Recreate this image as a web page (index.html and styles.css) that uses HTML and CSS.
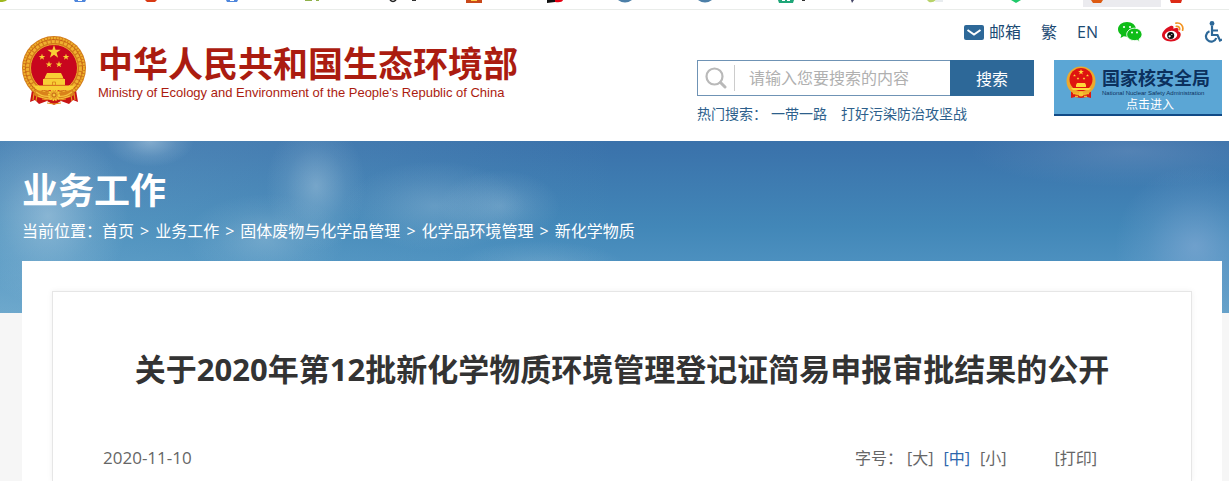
FILE: index.html
```html
<!DOCTYPE html>
<html lang="zh-CN">
<head>
    <meta charset="UTF-8">
    <meta name="viewport" content="width=device-width, initial-scale=1.0">
    <title>中华人民共和国生态环境部</title>
    <link rel="stylesheet" href="styles.css">
</head>
<body>
    <!-- National emblem: detailed one for the logo, simple one for the nuclear safety box -->
    <svg class="sprite" aria-hidden="true">
        <symbol id="star" viewBox="-10 -10 20 20">
            <path d="M0-10 2.3-3.1 9.5-3.1 3.7 1.2 5.9 8.1 0 3.8-5.9 8.1-3.7 1.2-9.5-3.1-2.3-3.1z"/>
        </symbol>
        <symbol id="emblem" viewBox="0 0 64 70">
            <path d="M10 54 8 66l5-2 4 4 8-3 7 4 7-4 8 3 4-4 5 2-2-12z" fill="#c81414"/>
            <path d="M12 57l-1 7M15 59l-1 6M52 57l1 7M49 59l1 6M20 63l6 1M44 63l-6 1M25 67l7 1 7-1" stroke="#e8961e" stroke-width="1.2" fill="none"/>
            <circle cx="32" cy="32" r="32" fill="#d27a1a"/>
            <circle cx="32" cy="32" r="30" fill="none" stroke="#eeb02a" stroke-width="2" stroke-dasharray="2 1"/>
            <circle cx="32" cy="32" r="26.500" fill="none" stroke="#f0b030" stroke-width="3" stroke-dasharray="3 1.200"/>
            <circle cx="32" cy="32" r="28.400" fill="none" stroke="#bd5212" stroke-width="0.700" stroke-dasharray="2 2"/>
            <circle cx="32" cy="32" r="23.500" fill="#c8061e" stroke="#e9a52a" stroke-width="1"/>
            <g fill="#f8cf35">
                <use href="#star" x="25" y="9" width="14" height="14"/>
                <use href="#star" x="16.500" y="17.500" width="7" height="7"/>
                <use href="#star" x="40.500" y="17.500" width="7" height="7"/>
                <use href="#star" x="23.500" y="25" width="7" height="7"/>
                <use href="#star" x="33.500" y="25" width="7" height="7"/>
                <path d="M25 37h14l2 4H23zM23 41h18v2H23zM21 43h22v6H21zM11 49.500h42l-3 4.500H15z"/>
            </g>
            <path d="M22 42.500h20M21 49.300h22M30.500 49v-3h3v3" stroke="#d87f18" stroke-width="0.800" fill="none"/>
            <path d="M14 53c6 5 30 5 36 0l2 6c-8 6-32 6-40 0z" fill="#d9821a"/>
            <path d="M14 56c5 4 10 5 15 4M50 56c-5 4-10 5-15 4M16 60c5 2 8 3 12 3M48 60c-5 2-8 3-12 3" stroke="#f5c03c" stroke-width="1.300" fill="none"/>
            <circle cx="32" cy="59" r="5" fill="#e9a52a" stroke="#f8cf35" stroke-width="2" stroke-dasharray="1.500 1"/>
            <circle cx="32" cy="59" r="2" fill="#f6ca3a" stroke="#b9500e" stroke-width="0.800"/>
        </symbol>
        <symbol id="emblem-small" viewBox="0 0 30 33">
            <path d="M5 24v8l4-1 6 1 6-1 4 1v-8z" fill="#dd1a12"/>
            <circle cx="15" cy="15" r="14.500" fill="#eda92c"/>
            <circle cx="15" cy="13.500" r="11.500" fill="#df1410"/>
            <g fill="#ffd83a">
                <use href="#star" x="12" y="3" width="6" height="6"/>
                <use href="#star" x="7" y="8" width="3" height="3"/>
                <use href="#star" x="20" y="8" width="3" height="3"/>
                <use href="#star" x="10.500" y="11" width="3" height="3"/>
                <use href="#star" x="16.500" y="11" width="3" height="3"/>
                <path d="M11 17h8l1 2v2H10v-2zM5 22h20l-2 2H7z"/>
            </g>
            <path d="M7 27.500h5M18 27.500h5M9 30.500h3M18 30.500h3" stroke="#f4b62c" stroke-width="1.500"/>
            <circle cx="15" cy="28" r="2.500" fill="#f7c532"/>
        </symbol>
    </svg>

    <div class="tab-strip">
        <svg width="1229" height="9" viewBox="0 0 1229 9" aria-hidden="true">
            <rect x="1083" y="0" width="78" height="7" fill="#ebebef"/>
            <path d="M0 0h7q-2 2-7 2z" fill="#9fb820"/>
            <path d="M74 0h12l-1 2H75zM226 0h12l-1 2h-10z" fill="#4f86dc"/>
            <path d="M78 0h4v1h-4zM230 0h4v1h-4z" fill="#fff"/>
            <path d="M145 0h12l-2 2h-8z" fill="#d93a14"/>
            <path d="M305 0h7v1h-7zM316 0h3v1h-3z" fill="#8fb04a"/>
            <path d="M390 0q3 3 6 0" fill="none" stroke="#222" stroke-width="1.500"/>
            <path d="M412 0h4v1h-4zM802 0h3v1h-3z" fill="#333"/>
            <path d="M466 0h16v3h-16z" fill="#c9481a"/>
            <path d="M471 0h6v1h-6z" fill="#ffd24a"/>
            <path d="M547 0h9l-1 2-8 1z" fill="#111"/>
            <path d="M555 0h8q-1 3-8 2z" fill="#e60012"/>
            <path d="M618 0h14q-7 5-14 0zM698 0h14q-7 5-14 0z" fill="#4d7fa8"/>
            <path d="M778 0h16l-1 3h-14z" fill="#1fa678"/>
            <path d="M782 0h3v1h-3zM787 0h3v1h-3z" fill="#fff"/>
            <path d="M851 0h3l-2 3z" fill="#446"/>
            <path d="M927 0h9q-3 3-7 2z" fill="#b8d36a"/>
            <path d="M936 0h7v2h-8z" fill="#e8ecef"/>
            <path d="M1011 0h10l-5 3z" fill="#1fc96a"/>
            <path d="M1091 0h12l-2 3h-8z" fill="#dd5a12"/>
            <path d="M1170 0h12l-1 3h-10z" fill="#dd2a16"/>
        </svg>
    </div>

    <header class="header">
        <a class="brand" href="#">
            <svg class="brand-emblem"><use href="#emblem"/></svg>
            <span class="brand-text">
                <span class="brand-cn">中华人民共和国生态环境部</span>
                <span class="brand-en">Ministry of Ecology and Environment of the People's Republic of China</span>
            </span>
        </a>

        <div class="header-right">
            <nav class="tools">
                <a class="mail" href="#">
                    <svg width="20" height="15" viewBox="0 0 20 15" aria-hidden="true">
                        <rect width="20" height="15" rx="2" fill="#2d6898"/>
                        <path d="M3.500 5 10 9.500 16.500 5" fill="none" stroke="#fff" stroke-width="2"/>
                    </svg>
                    邮箱
                </a>
                <a href="#">繁</a>
                <a href="#">EN</a>
                <a href="#" aria-label="微信">
                    <svg width="24" height="20" viewBox="0 0 24 20">
                        <path d="M9 0C4 0 0 3.200 0 7.300c0 2.300 1.300 4.200 3.300 5.600L2.500 16l3.300-1.700c1 .3 2 .4 3.200.4C14 14.700 18 11.400 18 7.300S14 0 9 0z" fill="#0fbd18"/>
                        <path d="M16.500 6.200c-4.400 0-7.800 2.800-7.800 6.200s3.400 6.200 7.800 6.200c.9 0 1.800-.1 2.600-.4l2.500 1.500-.6-2.500c1.800-1.100 3-2.900 3-4.800 0-3.400-3.200-6.200-7.500-6.200z" fill="#0fbd18" stroke="#fff" stroke-width="0.900"/>
                        <g fill="#fff"><circle cx="6" cy="5" r="1.100"/><circle cx="12" cy="5" r="1.100"/><circle cx="14" cy="10.500" r="1"/><circle cx="19" cy="10.500" r="1"/></g>
                    </svg>
                </a>
                <a href="#" aria-label="微博">
                    <svg width="22" height="20" viewBox="0 0 22 20">
                        <path d="M8 4.200c2-1 3.800-.5 3.500 1.700l-.2.900c2-.9 5.600-1.300 5.200 1.300l-.3 1.100c1.500.5 2.500 1.400 2.500 3.300 0 4-4.400 7-9.800 7C4 19.500 0 17 0 13.300 0 9.500 4.300 5.700 8 4.200z" fill="#dc0f1e"/>
                        <ellipse cx="9" cy="13.200" rx="6.200" ry="4.300" transform="rotate(-7 9 13.200)" fill="#fff"/>
                        <circle cx="8.700" cy="13.400" r="3.500" fill="#111"/>
                        <circle cx="7.600" cy="14.300" r="1.100" fill="#fff"/><circle cx="9.800" cy="12.500" r=".6" fill="#fff"/>
                        <path d="M14 1.200c4.500-1 7.800 2.700 6.600 7M14.300 4.400c2.300-.4 3.800 1.200 3.200 3.300" fill="none" stroke="#f29422" stroke-width="1.700" stroke-linecap="round"/>
                    </svg>
                </a>
                <a href="#" aria-label="无障碍">
                    <svg width="18" height="22" viewBox="0 0 18 22" fill="none" stroke="#2d6898" stroke-width="2.200">
                        <circle cx="8" cy="2.500" r="2.400" fill="#2d6898" stroke="none"/>
                        <path d="M8 5v9h5.500l2.500 5.500 2-1M8 9.500h6M5.500 10.300A5.300 5.300 0 1 0 12.300 17"/>
                    </svg>
                </a>
            </nav>

            <div class="header-row">
                <div class="search">
                    <form class="search-form">
                        <label class="search-icon" for="keyword" aria-label="搜索内容">
                            <svg width="22" height="22" viewBox="0 0 22 22" fill="none" stroke="#b9b9b9">
                                <circle cx="9.500" cy="9.500" r="8" stroke-width="2.200"/>
                                <path d="M15.500 15.500 20 20" stroke-width="3" stroke-linecap="round"/>
                            </svg>
                        </label>
                        <input class="search-input" id="keyword" type="text" placeholder="请输入您要搜索的内容">
                        <button class="search-button" type="button">搜索</button>
                    </form>
                    <div class="hot">
                        <span>热门搜索：</span>
                        <a href="#">一带一路</a>
                        <a href="#">打好污染防治攻坚战</a>
                    </div>
                </div>

                <a class="nuclear" href="#">
                    <svg class="nuclear-emblem"><use href="#emblem-small"/></svg>
                    <span class="nuclear-text">
                        <span class="nuclear-cn">国家核安全局</span>
                        <span class="nuclear-en">National Nuclear Safety Administration</span>
                        <span class="nuclear-enter">点击进入</span>
                    </span>
                </a>
            </div>
        </div>
    </header>

    <section class="banner">
        <h2>业务工作</h2>
        <nav class="breadcrumb">
            <span>当前位置：<a href="#">首页</a></span>
            <span>&gt;</span>
            <a href="#">业务工作</a>
            <span>&gt;</span>
            <a href="#">固体废物与化学品管理</a>
            <span>&gt;</span>
            <a href="#">化学品环境管理</a>
            <span>&gt;</span>
            <a href="#">新化学物质</a>
        </nav>
    </section>

    <main class="content">
        <article class="article">
            <h1>关于2020年第12批新化学物质环境管理登记证简易申报审批结果的公开</h1>
            <div class="meta">
                <time class="date" datetime="2020-11-10">2020-11-10</time>
                <div class="font-size">
                    <span>字号：</span>
                    <button type="button">[大]</button>
                    <button type="button" class="active">[中]</button>
                    <button type="button">[小]</button>
                    <button type="button" class="print">[打印]</button>
                </div>
            </div>
        </article>
    </main>
</body>
</html>
```
FILE: styles.css
```css
* {
    box-sizing: border-box;
}

body {
    display: flex;
    flex-direction: column;
    min-height: 100vh;
    margin: 0;
    background-color: #f6f6f6;
    color: #666;
    font-family: "Open Sans", "Noto Sans CJK SC", sans-serif;
    font-size: 16px;
    line-height: 24px;
}

a {
    color: inherit;
    text-decoration: none;
}

button,
input {
    font-family: inherit;
    font-size: 16px;
}

svg {
    display: block;
    flex: none;
}

.sprite {
    position: absolute;
    width: 0;
    height: 0;
}

.tab-strip {
    height: 10px;
    overflow: hidden;
    background-color: #fff;
    border-bottom: 1px solid #e9ece9;
}

/* Header */
.header {
    display: flex;
    justify-content: space-between;
    height: 131px;
    padding: 0 7px 0 22px;
    background-color: #fff;
}

.brand {
    display: flex;
    align-items: flex-start;
    gap: 12px;
    padding-top: 26px;
    color: #ab1c10;
}

.brand-emblem {
    width: 64px;
    height: 70px;
}

.brand-text {
    display: flex;
    flex-direction: column;
    padding-top: 8px;
    white-space: nowrap;
}

.brand-cn {
    font-size: 35px;
    font-weight: bold;
    line-height: 40px;
}

.brand-en {
    font-family: "Liberation Sans", Arial, sans-serif;
    font-size: 13px;
    line-height: 18px;
}

.header-right {
    display: flex;
    flex-direction: column;
    gap: 16px;
    padding-top: 10px;
}

.tools {
    display: flex;
    align-items: center;
    justify-content: flex-end;
    gap: 20px;
    height: 24px;
    color: #1c4a73;
}

.mail {
    display: flex;
    align-items: center;
    gap: 5px;
}

.header-row {
    display: flex;
    align-items: flex-start;
    gap: 20px;
}

.search-form {
    display: flex;
    width: 337px;
    height: 36px;
}

.search-icon {
    display: flex;
    align-items: center;
    padding: 0 7px;
    border: 1px solid #6f93b5;
    border-right: 0;
}

.search-input {
    flex: 1;
    min-width: 0;
    padding: 0 0 0 15px;
    border: 0 solid #6f93b5;
    border-width: 1px 0;
    border-radius: 0;
    background: linear-gradient(#ccc, #ccc) 0 4px / 1px 26px no-repeat #fff;
    outline: none;
}

.search-input::placeholder {
    color: #b0b0b0;
}

.search-button {
    width: 84px;
    border: 0;
    background-color: #2d6898;
    color: #fff;
    cursor: pointer;
}

.hot {
    display: flex;
    padding-top: 6px;
    color: #2d5f8c;
    font-size: 14px;
}

.hot a {
    margin-right: 14px;
}

.hot span {
    margin-right: 4px;
}

.nuclear {
    display: flex;
    gap: 6px;
    width: 168px;
    height: 56px;
    padding: 6px 12px 0;
    background-color: #5ba6d5;
    border-bottom: 2px solid #114a86;
    color: #0c315e;
}

.nuclear-emblem {
    width: 30px;
    height: 33px;
}

.nuclear-text {
    display: flex;
    flex-direction: column;
    white-space: nowrap;
}

.nuclear-cn {
    font-size: 18px;
    font-weight: bold;
    line-height: 24px;
}

.nuclear-en {
    font-family: "Liberation Sans", Arial, sans-serif;
    font-size: 6px;
    line-height: 7px;
}

.nuclear-enter {
    padding-left: 24px;
    color: #fff;
    font-size: 12px;
    line-height: 16px;
}

/* Banner with the sky behind it */
.banner {
    height: 172px;
    padding: 30px 22px 0;
    color: #fff;
    background:
        radial-gradient(ellipse 44px 26px at 150px 0, rgba(190, 215, 232, 0.5), rgba(190, 215, 232, 0.15) 60%, transparent),
        radial-gradient(ellipse 80px 90px at 48px 75px, rgba(190, 215, 232, 0.5), rgba(190, 215, 232, 0.15) 60%, transparent),
        radial-gradient(ellipse 50px 65px at 316px 45px, rgba(175, 205, 225, 0.45), rgba(175, 205, 225, 0.12) 60%, transparent),
        radial-gradient(ellipse 80px 45px at 265px 98px, rgba(175, 205, 225, 0.35), rgba(175, 205, 225, 0.1) 60%, transparent),
        radial-gradient(ellipse 90px 45px at 435px 65px, rgba(175, 205, 225, 0.3), rgba(175, 205, 225, 0.1) 60%, transparent),
        radial-gradient(ellipse 60px 36px at 500px 65px, rgba(175, 205, 225, 0.3), rgba(175, 205, 225, 0.1) 60%, transparent),
        radial-gradient(ellipse 90px 30px at 540px 130px, rgba(175, 205, 225, 0.3), rgba(175, 205, 225, 0.1) 60%, transparent),
        radial-gradient(ellipse 80px 80px at 1195px 105px, rgba(150, 180, 220, 0.5), rgba(150, 180, 220, 0.15) 60%, transparent),
        radial-gradient(ellipse 160px 36px at 1130px 10px, rgba(140, 165, 200, 0.3), rgba(140, 165, 200, 0.1) 60%, transparent),
        linear-gradient(90deg, rgba(130, 185, 212, 0.3), transparent 50%),
        linear-gradient(#3a71aa, #4287b8 50%, #4c90bf 70%, #65a1c9);
}

.banner h2 {
    margin: 0;
    font-size: 36px;
    line-height: 40px;
}

.breadcrumb {
    display: flex;
    gap: 6px;
    padding-top: 8px;
}

/* Article */
.content {
    display: flex;
    flex: 1;
    margin: -52px 7px 0 22px;
    padding: 30px 30px 0;
    background-color: #fff;
}

.article {
    flex: 1;
    padding: 53px 94px 0 50px;
    border: 1px solid #e6e6e6;
    border-bottom: 0;
    box-shadow: 0 0 6px rgba(0, 0, 0, 0.06);
}

.article h1 {
    margin: 0 -44px 0 0;
    color: #333;
    font-size: 31px;
    line-height: 48px;
    text-align: center;
    white-space: nowrap;
}

.meta {
    display: flex;
    align-items: center;
    justify-content: space-between;
    padding-top: 53px;
}

.date {
    font-size: 17px;
}

.font-size {
    display: flex;
    gap: 10px;
}

.font-size span {
    margin-right: -6px;
}

.font-size button {
    padding: 0;
    border: 0;
    background: none;
    color: #666;
    line-height: 24px;
    cursor: pointer;
}

.font-size .active {
    color: #2d66ad;
}

.font-size .print {
    margin-left: 38px;
}
```
